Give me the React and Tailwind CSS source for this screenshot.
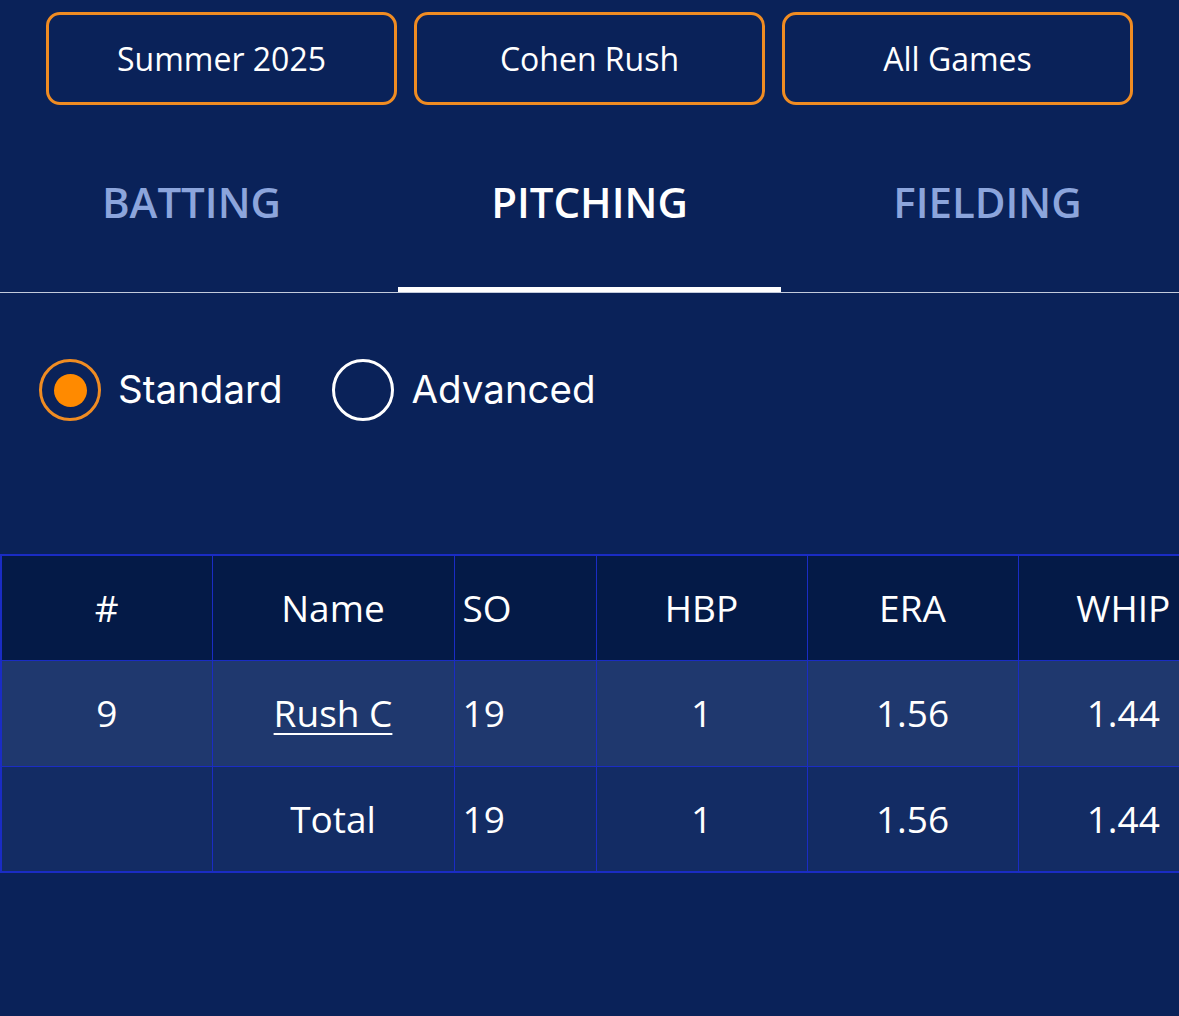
import React, { useState } from 'react';

const filters = ['Summer 2025', 'Cohen Rush', 'All Games'];
const tabs = ['BATTING', 'PITCHING', 'FIELDING'];

const columns = [
  { key: 'num', label: '#', w: 'w-[211px]', align: 'text-center' },
  { key: 'name', label: 'Name', w: 'w-[242px]', align: 'text-center' },
  { key: 'so', label: 'SO', w: 'w-[142px]', align: 'text-left pl-[8px]' },
  { key: 'hbp', label: 'HBP', w: 'w-[211px]', align: 'text-center' },
  { key: 'era', label: 'ERA', w: 'w-[211px]', align: 'text-center' },
  { key: 'whip', label: 'WHIP', w: 'w-[211px]', align: 'text-center' },
];

const rows = [
  { num: '9', name: 'Rush C', so: '19', hbp: '1', era: '1.56', whip: '1.44' },
];
const total = { num: '', name: 'Total', so: '19', hbp: '1', era: '1.56', whip: '1.44' };

const Radio = ({ label, checked, onClick }) => (
  <button onClick={onClick} className="flex items-center gap-[17px]">
    <span
      className={
        'flex h-[62px] w-[62px] items-center justify-center rounded-full ' +
        (checked ? 'border-[3px] border-[#f08c22]' : 'border-[3px] border-white')
      }
    >
      {checked && <span className="h-[33px] w-[33px] rounded-full bg-[#ff8a00]" />}
    </span>
    <span className="font-['Inter',sans-serif] text-[38.5px] text-white">{label}</span>
  </button>
);

export default function App() {
  const [tab, setTab] = useState('PITCHING');
  const [mode, setMode] = useState('Standard');

  return (
    <main className="min-h-screen w-full overflow-hidden bg-[#0a2259] font-['Open_Sans',sans-serif] text-white">
      <div className="grid grid-cols-3 gap-[17px] px-[46px] pt-[12px]">
        {filters.map((f) => (
          <button
            key={f}
            className="h-[93px] rounded-[14px] border-[3px] border-[#f08c22] text-[32px] text-white"
          >
            {f}
          </button>
        ))}
      </div>

      <div className="mt-[5px] grid grid-cols-3 gap-[15px] border-b border-[#c3cbdc]">
        {tabs.map((t) => (
          <button
            key={t}
            onClick={() => setTab(t)}
            className={
              'flex h-[182px] items-center justify-center pt-[5px] text-[42px] font-semibold ' +
              (tab === t ? 'border-b-[5px] border-white text-white' : 'border-b-[5px] border-transparent text-[#8ca5dc]')
            }
          >
            {t}
          </button>
        ))}
      </div>

      <div className="mt-[66px] flex items-center gap-[50px] pl-[39px]">
        <Radio label="Standard" checked={mode === 'Standard'} onClick={() => setMode('Standard')} />
        <Radio label="Advanced" checked={mode === 'Advanced'} onClick={() => setMode('Advanced')} />
      </div>

      <div className="mt-[133px] overflow-hidden">
        <table className="w-[1228px] table-fixed border-collapse border-2 border-[#1a2cc4] text-[37px]">
          <thead>
            <tr className="h-[105px] bg-[#041a47]">
              {columns.map((c) => (
                <th key={c.key} className={`${c.w} ${c.align} border border-[#1a2cc4] font-normal`}>
                  {c.label}
                </th>
              ))}
            </tr>
          </thead>
          <tbody>
            {rows.map((r) => (
              <tr key={r.name} className="h-[106px] bg-[#1f386e]">
                {columns.map((c) => (
                  <td key={c.key} className={`${c.align} border border-[#1a2cc4]`}>
                    {c.key === 'name' ? <a className="underline underline-offset-[6px] decoration-2">{r.name}</a> : r[c.key]}
                  </td>
                ))}
              </tr>
            ))}
            <tr className="h-[106px] bg-[#132c64]">
              {columns.map((c) => (
                <td key={c.key} className={`${c.align} border border-[#1a2cc4]`}>
                  {total[c.key]}
                </td>
              ))}
            </tr>
          </tbody>
        </table>
      </div>
    </main>
  );
}
